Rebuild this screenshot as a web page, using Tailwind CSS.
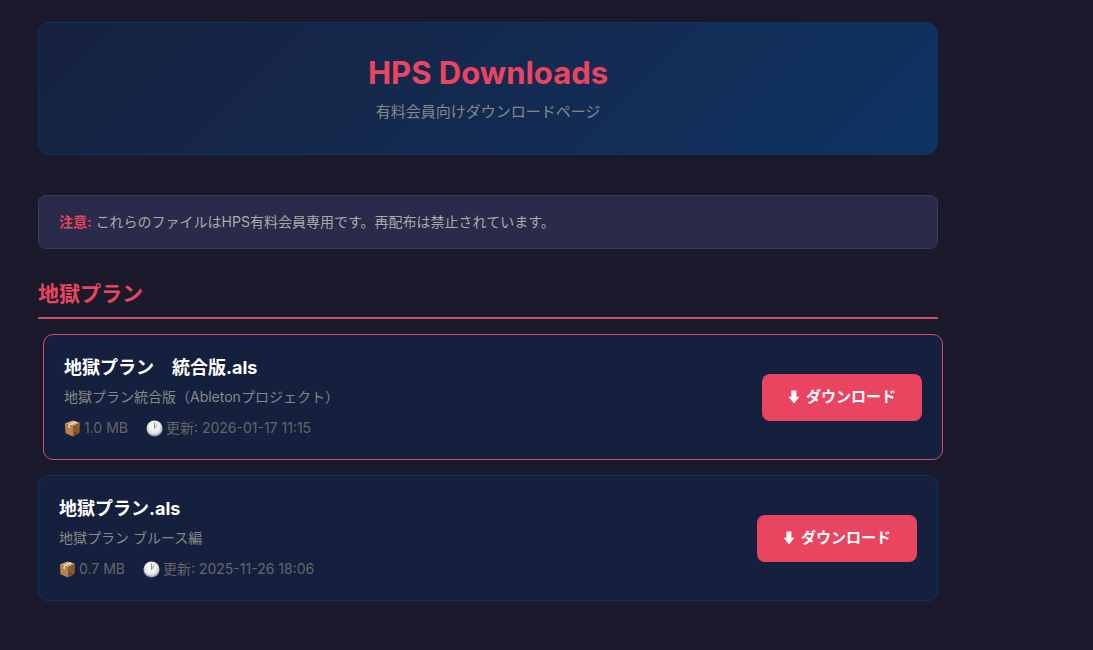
<!DOCTYPE html>
<html lang="ja">

<head>
    <meta charset="UTF-8">
    <meta name="viewport" content="width=device-width, initial-scale=1.0">
    <title>HPS Downloads</title>
    <script src="https://cdn.jsdelivr.net/npm/@tailwindcss/browser@4"></script>
</head>

<body class="bg-[#1b192c] font-['Inter','Noto_Sans_CJK_JP',sans-serif] text-[#eeeeee]">

    <!-- icons shared by the file cards -->
    <svg class="absolute size-0" aria-hidden="true">
        <defs>
            <linearGradient id="clock-rim" x1="0" y1="0" x2="0" y2="1">
                <stop offset="0" stop-color="#f4f4f4" />
                <stop offset="1" stop-color="#85898f" />
            </linearGradient>
            <radialGradient id="clock-face" cx="0.45" cy="0.35" r="0.65">
                <stop offset="0" stop-color="#ffffff" />
                <stop offset="0.7" stop-color="#e9eaeb" />
                <stop offset="1" stop-color="#c3c6c9" />
            </radialGradient>
        </defs>
        <symbol id="package" viewBox="0 0 18 18">
            <path d="M1 3.6 9 .4 17 3 9.6 6.6z" fill="#d3a676" />
            <path d="M1 3.6 9.6 6.6V17.6L1.6 14z" fill="#b5824f" />
            <path d="M9.6 6.6 17 3 16.4 13.6 9.6 17.6z" fill="#8a5a30" />
            <path d="M4.6 4.9 12 1.4 13.8 2 6.6 5.6z" fill="#efd9bb" />
            <path d="M4.6 4.9 6.6 5.6V9L4.6 8.2z" fill="#e3c8a4" />
            <path d="M11.2 13.3 13.4 12V13.4L11.2 14.7z" fill="#5f3a1c" />
        </symbol>
        <symbol id="clock" viewBox="0 0 18 18">
            <circle cx="9" cy="9" r="8.5" fill="url(#clock-rim)" />
            <circle cx="9" cy="8.8" r="7.5" fill="url(#clock-face)" />
            <path d="M9 3.2V9L11.3 5.3" fill="none" stroke="#6b6e72" stroke-width="0.8" stroke-linecap="round" stroke-linejoin="round" />
            <path d="M9 2v.8M9 15v.8M2.2 9H3M15 9h.8" stroke="#999ca0" stroke-width="0.6" />
        </symbol>
        <symbol id="arrow-down" viewBox="0 0 12 14">
            <path d="M3.4 0.5h5v6.3H11.4L6 13.5.6 6.8H3.4z" fill="currentColor" />
        </symbol>
    </svg>

    <main class="mr-4 ml-[38px] max-w-[900px] pt-[22px] pb-10">
        <header class="rounded-xl border border-[#0f3460] bg-linear-135 from-[#16213e] to-[#0d3363] px-8 py-[30px] text-center">
            <h1 class="text-[31px] leading-[39px] font-bold text-[#e94560]">HPS Downloads</h1>
            <p class="mt-2 text-[15px] leading-6 text-[#888888]">有料会員向けダウンロードページ</p>
        </header>

        <p class="mt-10 rounded-lg border border-[#3a3a5a] bg-[#2a2a4a] px-5 py-[14px] text-[14px] leading-6 text-[#aaaaaa]">
            <strong class="font-bold text-[#e94560]">注意:</strong> これらのファイルはHPS有料会員専用です。再配布は禁止されています。
        </p>

        <section class="mt-[30px]">
            <h2 class="border-b-2 border-[#cf4d68] pb-2 text-[21px] leading-[30px] font-bold text-[#e94560]">地獄プラン</h2>

            <div class="mt-[15px] flex flex-col gap-[15px]">
                <article class="-mr-[5px] ml-[5px] flex items-center justify-between gap-4 rounded-[10px] border border-[#cf4d68] bg-[#15203e] p-5">
                    <div>
                        <h3 class="text-[18px] leading-[26px] font-bold text-white">地獄プラン　統合版.als</h3>
                        <p class="mt-1 text-[14px] leading-6 text-[#888888]">地獄プラン統合版（Abletonプロジェクト）</p>
                        <div class="mt-2 flex gap-[18px] text-[14px] leading-[22px] text-[#666666]">
                            <span class="flex items-center gap-[3px]"><svg class="size-[17px]"><use href="#package" /></svg>1.0 MB</span>
                            <span class="flex items-center gap-[3px]"><svg class="size-[17px]"><use href="#clock" /></svg>更新: 2026-01-17 11:15</span>
                        </div>
                    </div>
                    <a href="#" class="flex h-[47px] w-40 shrink-0 items-center justify-center gap-[6px] rounded-lg bg-[#e94560] text-[15px] font-bold text-white hover:bg-[#ff6b6b]">
                        <svg class="h-[14px] w-3"><use href="#arrow-down" /></svg>ダウンロード
                    </a>
                </article>

                <article class="flex items-center justify-between gap-4 rounded-[10px] border border-[#0f3460] bg-[#15203e] p-5">
                    <div>
                        <h3 class="text-[18px] leading-[26px] font-bold text-white">地獄プラン.als</h3>
                        <p class="mt-1 text-[14px] leading-6 text-[#888888]">地獄プラン ブルース編</p>
                        <div class="mt-2 flex gap-[18px] text-[14px] leading-[22px] text-[#666666]">
                            <span class="flex items-center gap-[3px]"><svg class="size-[17px]"><use href="#package" /></svg>0.7 MB</span>
                            <span class="flex items-center gap-[3px]"><svg class="size-[17px]"><use href="#clock" /></svg>更新: 2025-11-26 18:06</span>
                        </div>
                    </div>
                    <a href="#" class="flex h-[47px] w-40 shrink-0 items-center justify-center gap-[6px] rounded-lg bg-[#e94560] text-[15px] font-bold text-white hover:bg-[#ff6b6b]">
                        <svg class="h-[14px] w-3"><use href="#arrow-down" /></svg>ダウンロード
                    </a>
                </article>
            </div>
        </section>
    </main>
</body>

</html>
